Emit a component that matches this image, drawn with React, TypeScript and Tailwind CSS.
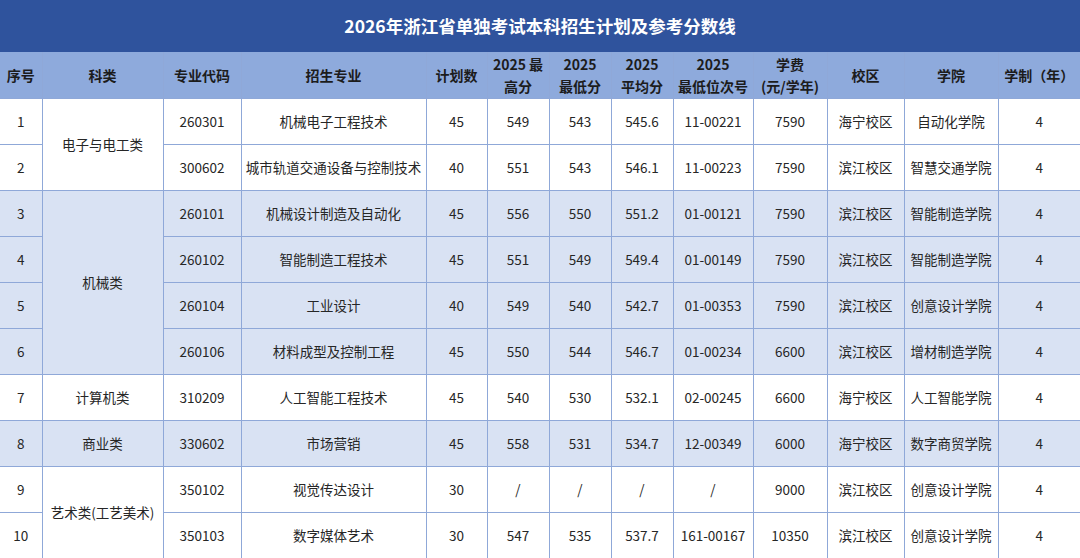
import React from "react";

type Row = {
  no: number;
  code: string;
  major: string;
  plan: number;
  max: string;
  min: string;
  avg: string;
  rank: string;
  fee: string;
  campus: string;
  school: string;
  years: number;
  shade: boolean;
  cat?: { label: string; span: number };
};

const rows: Row[] = [
  { no: 1, code: "260301", major: "机械电子工程技术", plan: 45, max: "549", min: "543", avg: "545.6", rank: "11-00221", fee: "7590", campus: "海宁校区", school: "自动化学院", years: 4, shade: false, cat: { label: "电子与电工类", span: 2 } },
  { no: 2, code: "300602", major: "城市轨道交通设备与控制技术", plan: 40, max: "551", min: "543", avg: "546.1", rank: "11-00223", fee: "7590", campus: "滨江校区", school: "智慧交通学院", years: 4, shade: false },
  { no: 3, code: "260101", major: "机械设计制造及自动化", plan: 45, max: "556", min: "550", avg: "551.2", rank: "01-00121", fee: "7590", campus: "滨江校区", school: "智能制造学院", years: 4, shade: true, cat: { label: "机械类", span: 4 } },
  { no: 4, code: "260102", major: "智能制造工程技术", plan: 45, max: "551", min: "549", avg: "549.4", rank: "01-00149", fee: "7590", campus: "滨江校区", school: "智能制造学院", years: 4, shade: true },
  { no: 5, code: "260104", major: "工业设计", plan: 40, max: "549", min: "540", avg: "542.7", rank: "01-00353", fee: "7590", campus: "滨江校区", school: "创意设计学院", years: 4, shade: true },
  { no: 6, code: "260106", major: "材料成型及控制工程", plan: 45, max: "550", min: "544", avg: "546.7", rank: "01-00234", fee: "6600", campus: "滨江校区", school: "增材制造学院", years: 4, shade: true },
  { no: 7, code: "310209", major: "人工智能工程技术", plan: 45, max: "540", min: "530", avg: "532.1", rank: "02-00245", fee: "6600", campus: "海宁校区", school: "人工智能学院", years: 4, shade: false, cat: { label: "计算机类", span: 1 } },
  { no: 8, code: "330602", major: "市场营销", plan: 45, max: "558", min: "531", avg: "534.7", rank: "12-00349", fee: "6000", campus: "海宁校区", school: "数字商贸学院", years: 4, shade: true, cat: { label: "商业类", span: 1 } },
  { no: 9, code: "350102", major: "视觉传达设计", plan: 30, max: "/", min: "/", avg: "/", rank: "/", fee: "9000", campus: "滨江校区", school: "创意设计学院", years: 4, shade: false, cat: { label: "艺术类(工艺美术)", span: 2 } },
  { no: 10, code: "350103", major: "数字媒体艺术", plan: 30, max: "547", min: "535", avg: "537.7", rank: "161-00167", fee: "10350", campus: "滨江校区", school: "创意设计学院", years: 4, shade: false },
];

const widths = [42, 121, 78, 185, 61, 62, 62, 62, 80, 74, 77, 94, 82];

const td = "border border-[#8fa8d8] px-0 text-center align-middle";

export default function App() {
  return (
    <div
      className="w-[1080px] h-[558px] overflow-hidden bg-white text-[#262626]"
      style={{ fontFamily: '"Noto Sans CJK SC", "Noto Sans", sans-serif' }}
    >
      <div className="h-[52px] flex items-center justify-center bg-[#2f539d] text-white text-[17.5px] font-bold">
        2026年浙江省单独考试本科招生计划及参考分数线
      </div>
      <table className="w-[1080px] table-fixed border-collapse border-hidden">
        <colgroup>
          {widths.map((w, i) => (
            <col key={i} style={{ width: w }} />
          ))}
        </colgroup>
        <thead>
          <tr className="h-[46px] bg-[#8eaadc] text-[14px] font-bold leading-[22px] text-[#1c1c1c]">
            <th className={td}>序号</th>
            <th className={td}>科类</th>
            <th className={td}>专业代码</th>
            <th className={td}>招生专业</th>
            <th className={td}>计划数</th>
            <th className={td}>2025 最<br />高分</th>
            <th className={td}>2025<br />最低分</th>
            <th className={td}>2025<br />平均分</th>
            <th className={td}>2025<br />最低位次号</th>
            <th className={td}>学费<br />(元/学年)</th>
            <th className={td}>校区</th>
            <th className={td}>学院</th>
            <th className={td}>学制（年）</th>
          </tr>
        </thead>
        <tbody className="text-[13.5px]">
          {rows.map((r) => (
            <tr key={r.no} className={r.shade ? "h-[46px] bg-[#d9e2f3]" : "h-[46px] bg-white"}>
              <td className={td}>{r.no}</td>
              {r.cat && (
                <td className={td} rowSpan={r.cat.span}>
                  {r.cat.label}
                </td>
              )}
              <td className={td}>{r.code}</td>
              <td className={td + " whitespace-nowrap"}>{r.major}</td>
              <td className={td}>{r.plan}</td>
              <td className={td}>{r.max}</td>
              <td className={td}>{r.min}</td>
              <td className={td}>{r.avg}</td>
              <td className={td}>{r.rank}</td>
              <td className={td}>{r.fee}</td>
              <td className={td}>{r.campus}</td>
              <td className={td}>{r.school}</td>
              <td className={td}>{r.years}</td>
            </tr>
          ))}
        </tbody>
      </table>
    </div>
  );
}
